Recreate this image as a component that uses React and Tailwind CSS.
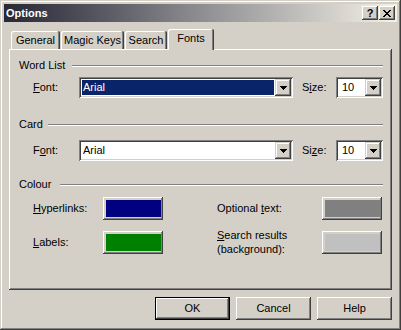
import React from "react";

const raised =
  "shadow-[inset_-1px_-1px_0_#404040,inset_1px_1px_0_#ffffff,inset_-2px_-2px_0_#808080,inset_2px_2px_0_#d4d0c8]";
const arrowRaised =
  "shadow-[inset_-1px_-1px_0_#404040,inset_1px_1px_0_#d4d0c8,inset_-2px_-2px_0_#808080,inset_2px_2px_0_#ffffff]";
const sunken =
  "shadow-[inset_1px_1px_0_#808080,inset_-1px_-1px_0_#ffffff,inset_2px_2px_0_#404040,inset_-2px_-2px_0_#d4d0c8]";

function DownArrow() {
  return (
    <svg width="7" height="4" viewBox="0 0 7 4" shapeRendering="crispEdges">
      <rect x="0" y="0" width="7" height="1" fill="#000" />
      <rect x="1" y="1" width="5" height="1" fill="#000" />
      <rect x="2" y="2" width="3" height="1" fill="#000" />
      <rect x="3" y="3" width="1" height="1" fill="#000" />
    </svg>
  );
}

function CloseGlyph() {
  return (
    <svg width="8" height="7" viewBox="0 0 8 7" shapeRendering="crispEdges">
      <rect x="0" y="0" width="2" height="1" fill="#000" />
      <rect x="6" y="0" width="2" height="1" fill="#000" />
      <rect x="1" y="1" width="2" height="1" fill="#000" />
      <rect x="5" y="1" width="2" height="1" fill="#000" />
      <rect x="2" y="2" width="4" height="1" fill="#000" />
      <rect x="3" y="3" width="2" height="1" fill="#000" />
      <rect x="2" y="4" width="4" height="1" fill="#000" />
      <rect x="1" y="5" width="2" height="1" fill="#000" />
      <rect x="5" y="5" width="2" height="1" fill="#000" />
      <rect x="0" y="6" width="2" height="1" fill="#000" />
      <rect x="6" y="6" width="2" height="1" fill="#000" />
    </svg>
  );
}

function TitleBtn({ children }) {
  return (
    <div
      className={`w-[16px] h-[14px] bg-[#d4d0c8] flex items-center justify-center ${raised}`}
    >
      {children}
    </div>
  );
}

function Combo({ width, value, selected, pad }) {
  return (
    <div className={`flex h-[21px] ${width} p-[2px] bg-white ${sunken}`}>
      <div className="flex-1 flex p-[1px]">
        <div
          className={
            selected
              ? "flex-1 flex items-center bg-[#0a246a] text-white pl-[1px]"
              : `flex-1 flex items-center ${pad}`
          }
        >
          {value}
        </div>
      </div>
      <div
        className={`w-[16px] h-[17px] bg-[#d4d0c8] flex items-center justify-center ${arrowRaised}`}
      >
        <DownArrow />
      </div>
    </div>
  );
}

function Tab({ w, children, selected }) {
  if (selected) {
    return (
      <div
        className={`${w} h-[21px] -mb-[1px] relative z-10 bg-[#d4d0c8] rounded-t-[2px] flex justify-center pt-[2px] shadow-[inset_-1px_0_0_#404040,inset_1px_1px_0_#ffffff,inset_-2px_0_0_#808080]`}
      >
        <span className="mt-[1px]">{children}</span>
      </div>
    );
  }
  return (
    <div
      className={`${w} h-[18px] bg-[#d4d0c8] rounded-t-[2px] flex justify-center pt-[3px] shadow-[inset_-1px_0_0_#404040,inset_1px_1px_0_#ffffff,inset_-2px_0_0_#808080]`}
    >
      <span>{children}</span>
    </div>
  );
}

function Header({ label, lw, mt }) {
  return (
    <div className={`${mt} h-[13px] flex items-center`}>
      <span className={`${lw} whitespace-nowrap`}>{label}</span>
      <div className="flex-1 h-[2px] border-t border-t-[#808080] border-b border-b-white" />
    </div>
  );
}

function ColorBtn({ color }) {
  return (
    <div className={`w-[60px] h-[23px] flex pt-[3px] pl-[3px] pr-[2px] pb-[3px] bg-[#d4d0c8] ${raised}`}>
      <div className={`flex-1 ${color}`} />
    </div>
  );
}

function PushBtn({ children }) {
  return (
    <div
      className={`w-[75px] h-[23px] bg-[#d4d0c8] flex items-center justify-center ${raised}`}
    >
      {children}
    </div>
  );
}

export default function App() {
  return (
    <div className="w-[401px] h-[330px] bg-[#d4d0c8] p-[4px] flex flex-col font-['Liberation_Sans',Arial,sans-serif] text-[11px] leading-[13px] text-black shadow-[inset_-1px_-1px_0_#404040,inset_1px_1px_0_#d4d0c8,inset_-2px_-2px_0_#808080,inset_2px_2px_0_#ffffff]">
      {/* Title bar */}
      <div className="h-[18px] flex items-center justify-between bg-linear-to-r from-[#282836] via-[#8e8e92] to-[#f5f2e6] pl-[2px] pr-[2px]">
        <span className="font-bold text-white">Options</span>
        <div className="flex gap-[1px]">
          <TitleBtn>
            <span className="font-bold text-[11px] leading-[11px] mt-[1px]">?</span>
          </TitleBtn>
          <TitleBtn>
            <CloseGlyph />
          </TitleBtn>
        </div>
      </div>

      {/* Tabs */}
      <div className="mt-[7px] h-[20px] flex items-end pl-[7px] gap-[1px]">
        <Tab w="w-[49px]">General</Tab>
        <Tab w="w-[63px]">Magic Keys</Tab>
        <Tab w="w-[42px]">Search</Tab>
        <Tab w="w-[46px]" selected>
          Fonts
        </Tab>
      </div>

      {/* Panel */}
      <div className="mx-[5px] h-[241px] flex flex-col pl-[10px] pr-[9px] pt-[1px] shadow-[inset_-1px_-1px_0_#404040,inset_1px_1px_0_#ffffff,inset_-2px_-2px_0_#808080]">
        <Header label="Word List" lw="w-[53px]" mt="mt-[9px]" />
        <div className="mt-[5px] flex items-center pl-[14px]">
          <span className="w-[46px]">
            <span className="underline underline-offset-[1px]">F</span>ont:
          </span>
          <Combo width="w-[214px]" value="Arial" selected />
          <span className="ml-[9px] w-[34px]">
            S<span className="underline underline-offset-[1px]">i</span>ze:
          </span>
          <Combo width="w-[47px]" value="10" pad="pl-[3px]" />
        </div>

        <Header label="Card" lw="w-[29px]" mt="mt-[20px]" />
        <div className="mt-[9px] flex items-center pl-[14px]">
          <span className="w-[46px]">
            F<span className="underline underline-offset-[1px]">o</span>nt:
          </span>
          <Combo width="w-[214px]" value="Arial" pad="pl-[1px]" />
          <span className="ml-[9px] w-[34px]">
            Si<span className="underline underline-offset-[1px]">z</span>e:
          </span>
          <Combo width="w-[47px]" value="10" pad="pl-[3px]" />
        </div>

        <Header label="Colour" lw="w-[41px]" mt="mt-[17px]" />
        <div className="mt-[6px] flex items-center pl-[14px]">
          <span className="w-[70px]">
            <span className="underline underline-offset-[1px]">H</span>yperlinks:
          </span>
          <ColorBtn color="bg-[#000080]" />
          <span className="ml-[54px] w-[105px]">
            Optional <span className="underline underline-offset-[1px]">t</span>ext:
          </span>
          <ColorBtn color="bg-[#808080]" />
        </div>
        <div className="mt-[8px] flex items-center pl-[14px]">
          <span className="w-[70px]">
            <span className="underline underline-offset-[1px]">L</span>abels:
          </span>
          <ColorBtn color="bg-[#008000]" />
          <span className="ml-[54px] w-[105px] leading-[14px]">
            <span className="underline underline-offset-[1px]">S</span>earch results
            <br />
            (background):
          </span>
          <ColorBtn color="bg-[#c0c0c0]" />
        </div>
      </div>

      {/* Buttons */}
      <div className="mt-[7px] flex justify-end gap-[6px] pr-[5px]">
        <div className="w-[75px] h-[23px] border border-black flex">
          <div
            className={`flex-1 bg-[#d4d0c8] flex items-center justify-center shadow-[inset_-1px_-1px_0_#404040,inset_1px_1px_0_#ffffff,inset_-2px_-2px_0_#808080]`}
          >
            OK
          </div>
        </div>
        <PushBtn>Cancel</PushBtn>
        <PushBtn>Help</PushBtn>
      </div>
    </div>
  );
}
